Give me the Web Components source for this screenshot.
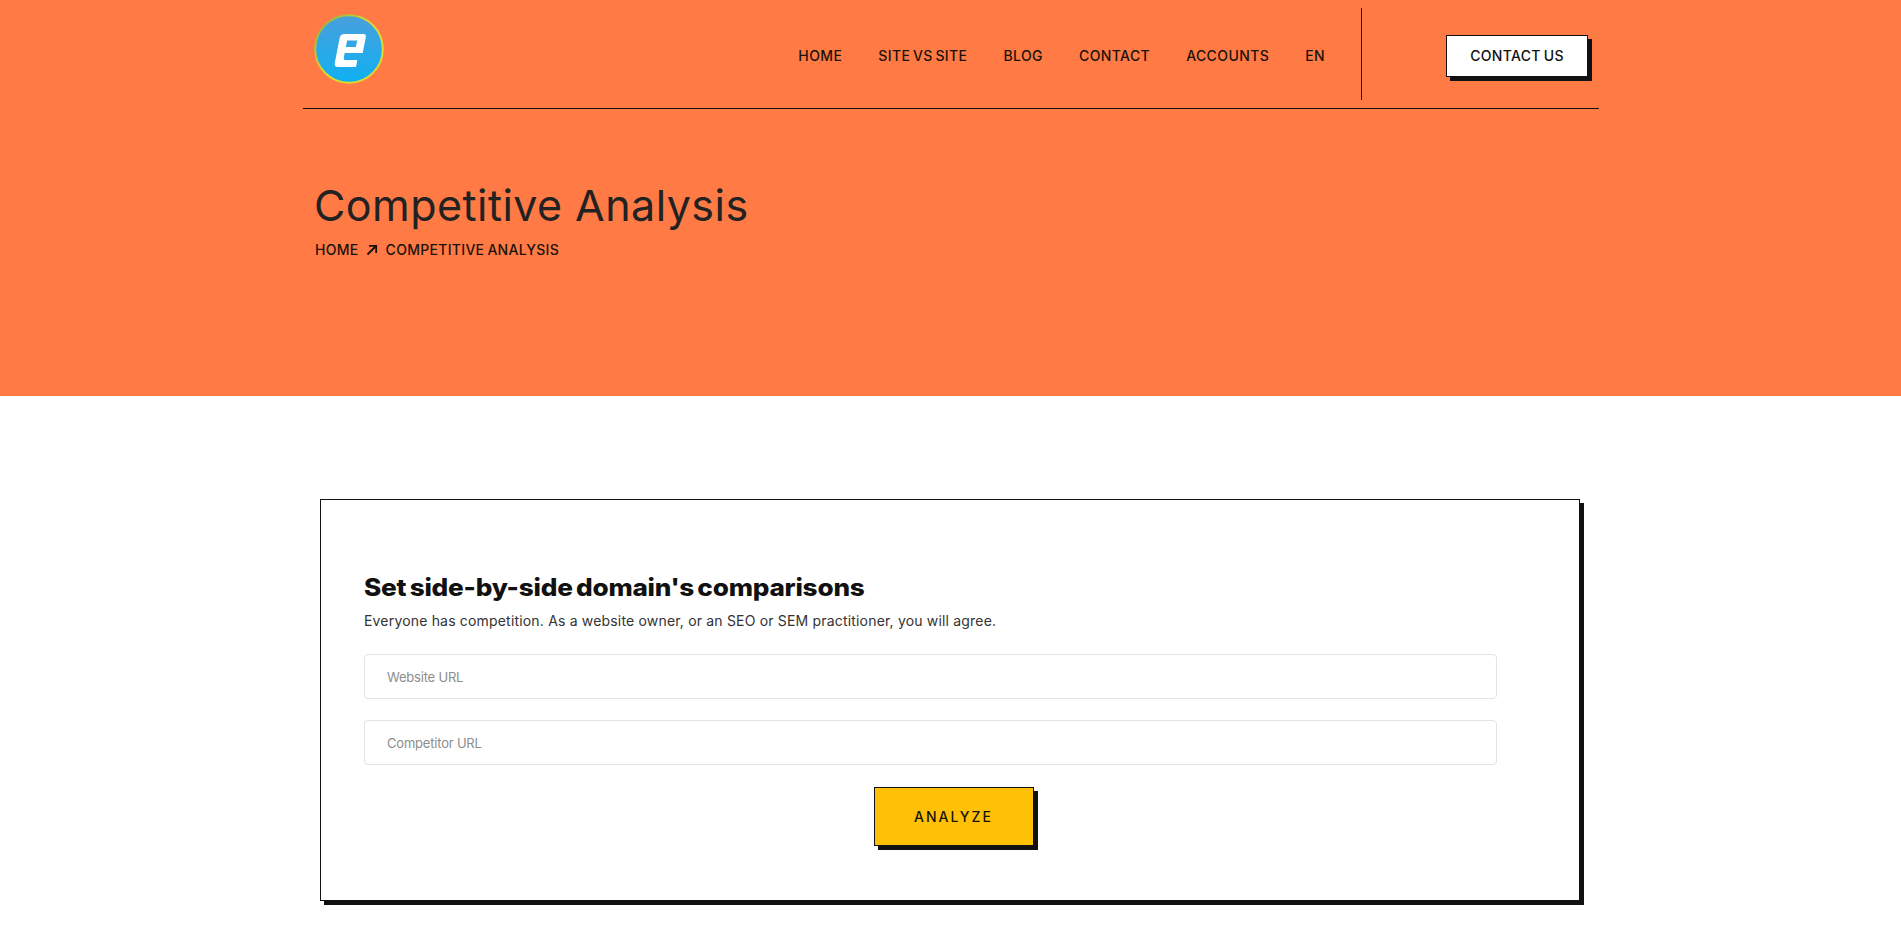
<!DOCTYPE html>
<html lang="en">
<head>
<meta charset="utf-8">
<title>Competitive Analysis</title>
<style>
  html, body { margin: 0; background: #fff; }
  body { font-family: Inter, "Liberation Sans", sans-serif; color: #1b1b1b; }
</style>
</head>
<body>
<site-header></site-header>
<page-title heading="Competitive Analysis" crumb="Competitive Analysis"></page-title>
<compare-form></compare-form>

<script>
// Logo, nav and contact button
class SiteHeader extends HTMLElement {
  constructor() {
    super();
    this.attachShadow({ mode: 'open' });
    this.shadowRoot.innerHTML = `
      <style>
        :host { display: block; background: #ff7a45; }
        .bar {
          width: 1296px;
          height: 109px;
          margin-left: 303px;
          box-sizing: border-box;
          border-bottom: 1px solid #111;
          display: flex;
          align-items: center;
          padding: 0 11px;
        }
        .logo { width: 70px; height: 70px; margin-bottom: 10px; display: block; }
        nav { margin: 3px 0 0 auto; display: flex; gap: 36px; align-items: center; }
        nav a {
          font-size: 14px;
          font-weight: 500;
          letter-spacing: .4px;
          word-spacing: -1.5px;
          color: #1a1209;
          text-decoration: none;
        }
        .rule { width: 1px; height: 92px; background: #111; margin: 8px 84px 0 36px; align-self: flex-start; }
        .cta {
          box-sizing: border-box;
          width: 142px;
          height: 42px;
          background: #fff;
          border: 1px solid #111;
          box-shadow: 4px 4px 0 #111;
          font-size: 14px;
          font-weight: 500;
          letter-spacing: .3px;
          word-spacing: -1px;
          color: #111;
          display: flex;
          align-items: center;
          justify-content: center;
          text-decoration: none;
          margin-top: 3px;
        }
      </style>
      <div class="bar">
        <svg class="logo" viewBox="0 0 70 70">
          <defs>
            <linearGradient id="fill" x1="0" y1="0" x2="0" y2="1">
              <stop offset="0" stop-color="#4a9fdc"/>
              <stop offset="1" stop-color="#0fb0f2"/>
            </linearGradient>
            <linearGradient id="ring" x1="0" y1="0" x2="1" y2="1">
              <stop offset="0" stop-color="#7fb04a"/>
              <stop offset=".5" stop-color="#e0dc2a"/>
              <stop offset="1" stop-color="#d8d838"/>
            </linearGradient>
          </defs>
          <circle cx="35" cy="35" r="33.8" fill="url(#fill)" stroke="url(#ring)" stroke-width="2"/>
          <path transform="translate(26.4 20) skewX(-11)" fill="#fff" fill-rule="evenodd"
            d="M4 0H23Q26 0 26 3V19H8V24Q8 26 10 26H22V33H4Q0 33 0 29V4Q0 0 4 0ZM8 6.500V13H18V6.500Z"/>
        </svg>
        <nav>
          <a href="#">HOME</a>
          <a href="#">SITE VS SITE</a>
          <a href="#">BLOG</a>
          <a href="#">CONTACT</a>
          <a href="#">ACCOUNTS</a>
          <a href="#">EN</a>
        </nav>
        <div class="rule"></div>
        <a class="cta" href="#">CONTACT US</a>
      </div>
    `;
  }
}

// Orange band under the header
class PageTitle extends HTMLElement {
  constructor() {
    super();
    this.attachShadow({ mode: 'open' });
  }

  connectedCallback() {
    const heading = this.getAttribute('heading');
    const crumb = this.getAttribute('crumb');
    this.shadowRoot.innerHTML = `
      <style>
        :host { display: block; background: #ff7a45; height: 287px; }
        .wrap { width: 1295px; margin-left: 303px; padding: 71px 0 0 11px; box-sizing: border-box; }
        h1 { margin: 0; font-size: 43px; line-height: 50px; font-weight: 400; color: #222; letter-spacing: .45px; }
        .crumbs {
          margin: 11px 0 0 1px;
          display: flex;
          align-items: center;
          gap: 7.5px;
          font-size: 14px;
          font-weight: 500;
          letter-spacing: .3px;
          word-spacing: -1px;
          color: #1a1209;
          text-transform: uppercase;
        }
        svg { width: 12px; height: 12px; }
      </style>
      <div class="wrap">
        <h1>${heading}</h1>
        <div class="crumbs">
          <span>Home</span>
          <svg viewBox="0 0 12 12" fill="none" stroke="#1a1209" stroke-width="1.8"><path d="M1.500 10.500L10 2M3 1.800H10.200V9"/></svg>
          <span>${crumb}</span>
        </div>
      </div>
    `;
  }
}

// Form card
class CompareForm extends HTMLElement {
  constructor() {
    super();
    this.attachShadow({ mode: 'open' });
    this.shadowRoot.innerHTML = `
      <style>
        :host { display: block; padding: 103px 0 40px 320px; }
        .card {
          box-sizing: border-box;
          width: 1260px;
          height: 402px;
          padding: 71px 82px 0 43px;
          background: #fff;
          border: 1px solid #111;
          box-shadow: 4px 4px 0 #111;
        }
        h2 {
          margin: 0;
          font-size: 24px;
          line-height: 34px;
          font-weight: 800;
          color: #111;
          letter-spacing: -.2px;
          word-spacing: -2px;
          white-space: nowrap;
          transform: scaleX(1.09);
          transform-origin: left center;
        }
        p { margin: 5px 0 0; font-size: 14px; line-height: 22px; color: #333; letter-spacing: .18px; }
        .fields { margin-top: 22px; display: flex; flex-direction: column; gap: 21px; }
        input {
          box-sizing: border-box;
          width: 100%;
          height: 45px;
          padding: 0 22px;
          border: 1px solid #e3e3e3;
          border-radius: 4px;
          font: 13px Inter, sans-serif;
          letter-spacing: -.2px;
          outline: none;
        }
        input::placeholder { color: #8d8d8d; opacity: 1; }
        .actions { margin-top: 22px; padding-left: 46px; display: flex; justify-content: center; }
        button {
          box-sizing: border-box;
          width: 160px;
          height: 59px;
          background: #ffc107;
          border: 1px solid #111;
          box-shadow: 4px 4px 0 #111;
          font: 500 14px Inter, sans-serif;
          letter-spacing: 2px;
          color: #1a1209;
        }
      </style>
      <div class="card">
        <h2>Set side-by-side domain's comparisons</h2>
        <p>Everyone has competition. As a website owner, or an SEO or SEM practitioner, you will agree.</p>
        <div class="fields">
          <input type="text" placeholder="Website URL">
          <input type="text" placeholder="Competitor URL">
        </div>
        <div class="actions"><button type="button">ANALYZE</button></div>
      </div>
    `;
  }
}

customElements.define('site-header', SiteHeader);
customElements.define('page-title', PageTitle);
customElements.define('compare-form', CompareForm);
</script>
</body>
</html>
